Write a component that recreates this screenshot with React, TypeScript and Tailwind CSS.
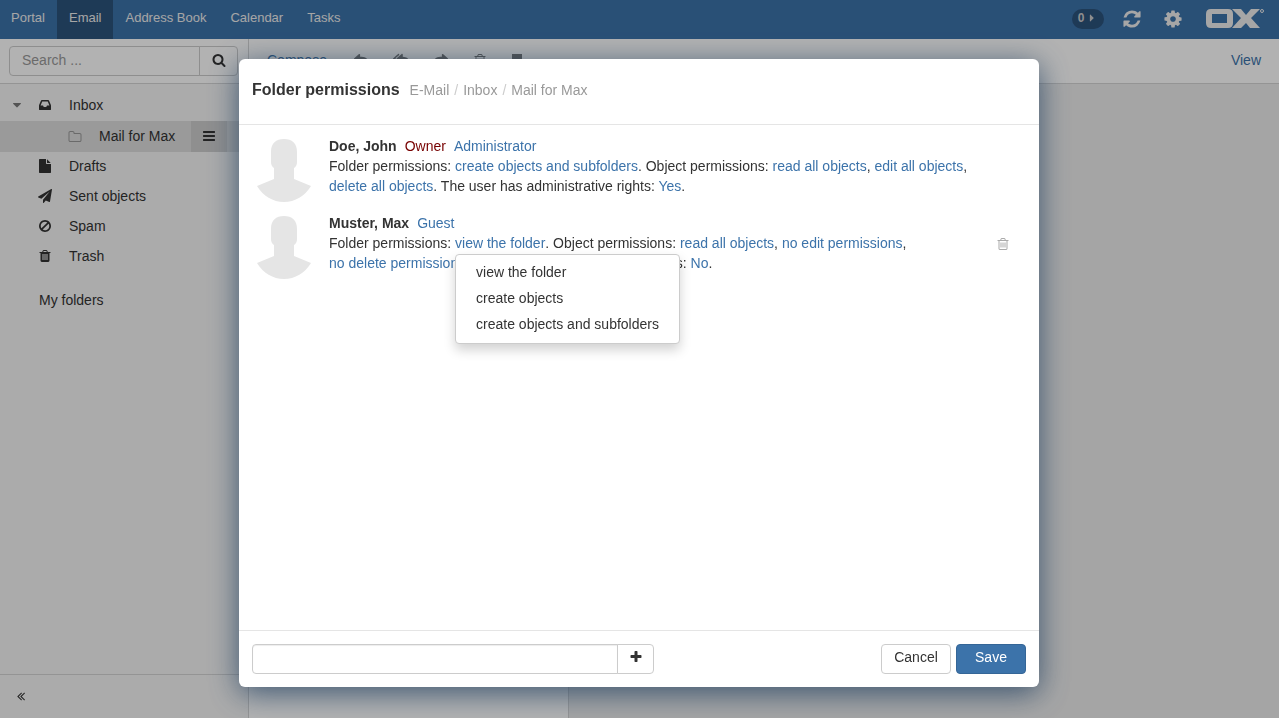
import { useState } from 'react';
import type { ReactNode } from 'react';
import { FaReply, FaReplyAll, FaShare } from 'react-icons/fa';

const TRASH_LID = 'M672 384h448l-48-117q-7-9-17-11h-317q-10 2-17 11zm928 32v64q0 14-9 23t-23 9h-96v948q0 83-47 143.5t-113 60.5h-832q-66 0-113-58.5t-47-141.5v-952h-96q-14 0-23-9t-9-23v-64q0-14 9-23t23-9h309l70-167q15-37 54-63t79-26h320q40 0 79 26t54 63l70 167h309q14 0 23 9t9 23z';

const ICONS = {
    search: 'M1216 832q0-185-131.5-316.5t-316.5-131.5-316.5 131.5-131.5 316.5 131.5 316.5 316.5 131.5 316.5-131.5 131.5-316.5zm512 832q0 52-38 90t-90 38q-54 0-90-38l-343-342q-179 124-399 124-143 0-273.5-55.5t-225-150-150-225-55.5-273.5 55.5-273.5 150-225 225-150 273.5-55.5 273.5 55.5 225 150 150 225 55.5 273.5q0 220-124 399l343 343q37 37 37 90z',
    refresh: 'M1639 1056q0 5-1 7-64 268-268 434.5t-478 166.5q-146 0-282.5-55t-243.5-157l-129 129q-19 19-45 19t-45-19-19-45v-448q0-26 19-45t45-19h448q26 0 45 19t19 45-19 45l-137 137q71 66 161 102t187 36q134 0 250-65t186-179q11-17 53-117 8-23 30-23h192q13 0 22.5 9.5t9.5 22.5zm25-800v448q0 26-19 45t-45 19h-448q-26 0-45-19t-19-45 19-45l138-138q-148-137-349-137-134 0-250 65t-186 179q-11 17-53 117-8 23-30 23h-199q-13 0-22.5-9.5t-9.5-22.5v-7q65-268 270-434.5t480-166.5q146 0 284 55.5t245 156.5l130-129q19-19 45-19t45 19 19 45z',
    cog: 'M1152 896q0-106-75-181t-181-75-181 75-75 181 75 181 181 75 181-75 75-181zm512-109v222q0 12-8 23t-20 13l-185 28q-19 54-39 91 35 50 107 138 10 12 10 25t-9 23q-27 37-99 108t-94 71q-12 0-26-9l-138-108q-44 23-91 38-16 136-29 186-7 28-36 28h-222q-14 0-24.5-8.5t-11.5-21.5l-28-184q-49-16-90-37l-141 107q-10 9-25 9-14 0-25-11-126-114-165-168-7-10-7-23 0-12 8-23 15-21 51-66.5t54-70.5q-27-50-41-99l-183-27q-13-2-21-12.5t-8-23.5v-222q0-12 8-23t19-13l186-28q14-46 39-92-40-57-107-138-10-12-10-24 0-10 9-23 26-36 98.5-107.5t94.5-71.5q13 0 26 10l138 107q44-23 91-38 16-136 29-186 7-28 36-28h222q14 0 24.5 8.5t11.5 21.5l28 184q49 16 90 37l142-107q9-9 24-9 13 0 25 10 129 119 165 170 7 8 7 22 0 12-8 23-15 21-51 66.5t-54 70.5q26 50 41 98l183 28q13 2 21 12.5t8 23.5z',
    inbox: 'M1151 960h316q-1-3-2.500-8t-2.500-8l-212-496h-708l-212 496q-1 2-2.500 8t-2.500 8h316l95 192h320zm513 30v482q0 26-19 45t-45 19h-1408q-26 0-45-19t-19-45v-482q0-62 25-123l238-552q10-25 36.500-42t52.500-17h832q26 0 52.500 17t36.500 42l238 552q25 61 25 123z',
    file: 'M1152 512v-472q22 14 36 28l408 408q14 14 28 36h-472zm-128 32q0 40 28 68t68 28h544v1056q0 40-28 68t-68 28h-1344q-40 0-68-28t-28-68v-1600q0-40 28-68t68-28h800v544z',
    plane: 'M1764 11q33 24 27 64l-256 1536q-5 29-32 45-14 8-31 8-11 0-24-5l-453-185-242 295q-18 23-49 23-13 0-22-4-19-7-30.500-23.500t-11.500-36.500v-349l864-1059-1069 925-395-162q-37-14-40-55-2-40 32-59l1664-960q15-9 32-9 20 0 36 11z',
    ban: 'M1440 893q0-161-87-295l-754 753q137 89 297 89 111 0 211.500-43.500t173.500-116.500 116-174.500 43-212.500zm-999 299l755-754q-135-91-300-91-148 0-273 73t-198 199-73 274q0 162 89 299zm1223-299q0 157-61 300t-163.500 246-245 164-298.500 61-298.500-61-245-164-163.500-246-61-300 61-299.500 163.500-245.500 245-164 298.500-61 298.500 61 245 164 163.500 245.500 61 299.500z',
    trash: `M576 640h128v768h-128zM832 640h128v768h-128zM1088 640h128v768h-128z${TRASH_LID}`,
    trashOutline: `M576 704h128v640h-128zM832 704h128v640h-128zM1088 704h128v640h-128zM1344 1460v-948h-896v948q0 22 7 40.500t14.500 27 10.500 8.500h832q3 0 10.500-8.500t14.500-27 7-40.500z${TRASH_LID}`,
    folder: 'M1600 1312v-704q0-40-28-68t-68-28h-704q-40 0-68-28t-28-68v-64q0-40-28-68t-68-28h-320q-40 0-68 28t-28 68v960q0 40 28 68t68 28h1216q40 0 68-28t28-68zm128-704v704q0 92-66 158t-158 66h-1216q-92 0-158-66t-66-158v-960q0-92 66-158t158-66h320q92 0 158 66t66 158v32h672q92 0 158 66t66 158z',
    bars: 'M1664 1344v128q0 26-19 45t-45 19h-1408q-26 0-45-19t-19-45v-128q0-26 19-45t45-19h1408q26 0 45 19t19 45zm0-512v128q0 26-19 45t-45 19h-1408q-26 0-45-19t-19-45v-128q0-26 19-45t45-19h1408q26 0 45 19t19 45zm0-512v128q0 26-19 45t-45 19h-1408q-26 0-45-19t-19-45v-128q0-26 19-45t45-19h1408q26 0 45 19t19 45z',
    plus: 'M1600 736v192q0 40-28 68t-68 28h-416v416q0 40-28 68t-68 28h-192q-40 0-68-28t-28-68v-416h-416q-40 0-68-28t-28-68v-192q0-40 28-68t68-28h416v-416q0-40 28-68t68-28h192q40 0 68 28t28 68v416h416q40 0 68 28t28 68z',
    caretDown: 'M1408 704q0 26-19 45l-448 448q-19 19-45 19t-45-19l-448-448q-19-19-19-45t19-45 45-19h896q26 0 45 19t19 45z',
    caretRight: 'M1152 896q0 26-19 45l-448 448q-19 19-45 19t-45-19-19-45v-896q0-26 19-45t45-19 45 19l448 448q19 19 19 45z',
    collapse: 'M1011 1376q0 13-10 23l-50 50q-10 10-23 10t-23-10l-466-466q-10-10-10-23t10-23l466-466q10-10 23-10t23 10l50 50q10 10 10 23t-10 23l-393 393 393 393q10 10 10 23zm384 0q0 13-10 23l-50 50q-10 10-23 10t-23-10l-466-466q-10-10-10-23t10-23l466-466q10-10 23-10t23 10l50 50q10 10 10 23t-10 23l-393 393 393 393q10 10 10 23z',
    archive: 'M256 128h1280v1536h-1280z',
};

type IconName = keyof typeof ICONS;

function Icon({ name, className = 'size-3.5' }: { name: IconName; className?: string }) {
    return (
        <svg viewBox="0 0 1792 1792" fill="currentColor" fillRule="evenodd" aria-hidden="true" className={`shrink-0 ${className}`}>
            <path d={ICONS[name]} />
        </svg>
    );
}

function Logo() {
    return (
        <svg viewBox="0 0 60 20" fill="currentColor" role="img" aria-label="OX" className="h-5 w-[60px]">
            <path fillRule="evenodd" d="M5 0H22Q27 0 27 5V14Q27 19 22 19H5Q0 19 0 14V5Q0 0 5 0ZM6 5V14H21V5Z" />
            <path d="M26 0H35L40 6L45 0H54L45 9L54 19H44L40 14L35 19H26L35 9Z" />
            <circle cx="56" cy="2" r="1.500" fill="none" stroke="currentColor" />
        </svg>
    );
}

function Avatar() {
    return (
        <svg viewBox="0 0 64 64" aria-hidden="true" className="size-16 shrink-0 fill-[#e5e5e5]">
            <path d="M19 14C19 5 24 1 32 1S45 5 45 14V24Q45 28 42 30V41L59 48C53 58 43 64 32 64S11 58 5 48L22 41V30Q19 28 19 24Z" />
        </svg>
    );
}

function TextLink({ children }: { children: ReactNode }) {
    return <a href="#" className="whitespace-nowrap text-[#3c73aa] hover:underline">{children}</a>;
}

const apps = ['Portal', 'Email', 'Address Book', 'Calendar', 'Tasks'];

const folders: { icon: IconName; title: string }[] = [
    { icon: 'file', title: 'Drafts' },
    { icon: 'plane', title: 'Sent objects' },
    { icon: 'ban', title: 'Spam' },
    { icon: 'trash', title: 'Trash' },
];

function TopBar() {
    return (
        <header className="flex h-[39px] shrink-0 items-center justify-between bg-[#3c73aa] text-[#eee]">
            <nav className="-ml-px flex h-full text-[13px]">
                {apps.map((app) => (
                    <a
                        key={app}
                        href="#"
                        className={`flex items-center px-3 pb-1 ${app === 'Email' ? 'bg-[#2c537c]' : ''}`}
                    >
                        {app}
                    </a>
                ))}
            </nav>
            <div className="flex items-center pr-[13px] pb-0.5">
                <button className="flex h-5 w-8 items-center justify-center gap-0.5 rounded-full bg-[#2c537c] pb-0.5 text-xs font-bold text-[#ccc]">
                    0 <Icon name="caretRight" className="size-3" />
                </button>
                <button aria-label="Refresh" className="ml-[18px]"><Icon name="refresh" className="size-5" /></button>
                <button aria-label="Settings" className="ml-[21px] mr-[23px]"><Icon name="cog" className="size-5" /></button>
                <Logo />
            </div>
        </header>
    );
}

function Sidebar() {
    return (
        <aside className="flex w-[249px] shrink-0 flex-col border-r border-[#d5d5d5] bg-[#f5f5f5]">
            <div className="flex h-[45px] items-start border-b border-[#d5d5d5] bg-white px-[9px] pt-[7px]">
                <input
                    type="text"
                    aria-label="Search"
                    placeholder="Search ..."
                    className="h-[30px] w-[191px] rounded-l border border-[#ccc] px-3 pb-0.5 placeholder:text-[#999]"
                />
                <button aria-label="Start search" className="-ml-px flex h-[30px] w-[39px] items-center justify-center rounded-r border border-[#ccc] pb-0.5">
                    <Icon name="search" />
                </button>
            </div>
            <ul className="flex-1 pt-[7px]">
                <li className="flex h-[30px] items-center pb-0.5 pl-2.5">
                    <Icon name="caretDown" className="size-3.5 text-[#777]" />
                    <Icon name="inbox" className="ml-3.5 size-3.5" />
                    <a href="#" className="ml-[17px]">Inbox</a>
                </li>
                <li className="flex h-[31px] items-center bg-[#ddd] pl-[68px]">
                    <Icon name="folder" className="size-3.5 text-[#999]" />
                    <a href="#" className="ml-[17px] flex-1 pb-0.5">Mail for Max</a>
                    <button aria-label="Folder actions" className="mr-[21px] flex h-full w-9 items-center justify-center bg-[#cdcdcd] pb-0.5">
                        <Icon name="bars" />
                    </button>
                </li>
                {folders.map((folder) => (
                    <li key={folder.title} className="flex h-[30px] items-center pb-0.5 pl-[38px]">
                        <Icon name={folder.icon} />
                        <a href="#" className="ml-[17px]">{folder.title}</a>
                    </li>
                ))}
                <li className="mt-3.5 flex h-[30px] items-center pb-0.5 pl-[39px]">My folders</li>
            </ul>
            <div className="flex h-11 items-center border-t border-[#d5d5d5] pb-0.5 pl-3.5">
                <button aria-label="Collapse sidebar"><Icon name="collapse" /></button>
            </div>
        </aside>
    );
}

function Toolbar() {
    return (
        <div className="flex h-[45px] shrink-0 items-center justify-between border-b border-[#d5d5d5] bg-white px-[18px] pb-0.5">
            <div className="flex items-center text-[#777]">
                <a href="#" className="text-[#3c73aa]">Compose</a>
                <button aria-label="Reply" className="ml-[27px]"><FaReply size={14} /></button>
                <button aria-label="Reply all" className="ml-[25px]"><FaReplyAll size={16} /></button>
                <button aria-label="Forward" className="ml-[25px]"><FaShare size={14} /></button>
                <button aria-label="Delete" className="ml-[25px]"><Icon name="trashOutline" /></button>
                <button aria-label="Archive" className="ml-[23px]"><Icon name="archive" /></button>
            </div>
            <a href="#" className="text-[#3c73aa]">View</a>
        </div>
    );
}

function FolderMenu({ onSelect }: { onSelect: () => void }) {
    const options = ['view the folder', 'create objects', 'create objects and subfolders'];

    return (
        <ul role="menu" className="absolute top-full left-0 z-10 mt-px rounded border border-[#ccc] bg-white py-[5px] shadow-[0_6px_12px_rgba(0,0,0,0.18)]">
            {options.map((option) => (
                <li key={option} role="none">
                    <button role="menuitem" onClick={onSelect} className="block h-[26px] px-5 pb-0.5 whitespace-nowrap text-[#333] hover:bg-gray-100">
                        {option}
                    </button>
                </li>
            ))}
        </ul>
    );
}

function PermissionsDialog() {
    const [menuOpen, setMenuOpen] = useState(true);

    return (
        <div
            role="dialog"
            aria-labelledby="dialog-title"
            className="flex w-full max-w-[800px] flex-col rounded-md bg-white shadow-[0_6px_30px_rgba(31,63,96,0.8)]"
        >
            <div className="flex h-[66px] items-center border-b border-[#e5e5e5] px-[13px] pb-1">
                <h1 id="dialog-title" className="text-base font-bold">Folder permissions</h1>
                <ol className="ml-2.5 flex gap-[5px] pt-px text-[#999]">
                    <li>E-Mail</li>
                    <li className="before:mr-[5px] before:text-[#ccc] before:content-['/']">Inbox</li>
                    <li className="before:mr-[5px] before:text-[#ccc] before:content-['/']">Mail for Max</li>
                </ol>
            </div>

            <div className="flex flex-1 flex-col gap-[13px] px-[13px] pt-[13px]">
                <div className="flex items-start">
                    <Avatar />
                    <div className="-mt-0.5 ml-[13px] flex-1 pr-10">
                        <div>
                            <b>Doe, John</b>
                            <span className="ml-2 text-[#700]">Owner</span>
                            <span className="ml-2 text-[#3c73aa]">Administrator</span>
                        </div>
                        <p>
                            Folder permissions: <TextLink>create objects and subfolders</TextLink>. Object permissions:{' '}
                            <TextLink>read all objects</TextLink>, <TextLink>edit all objects</TextLink>,{' '}
                            <TextLink>delete all objects</TextLink>. The user has administrative rights: <TextLink>Yes</TextLink>.
                        </p>
                    </div>
                </div>

                <div className="flex items-start">
                    <Avatar />
                    <div className="-mt-0.5 ml-[13px] flex-1">
                        <div>
                            <b>Muster, Max</b>
                            <span className="ml-2 text-[#3c73aa]">Guest</span>
                        </div>
                        <p>
                            Folder permissions:{' '}
                            <span className="relative inline-block">
                                <button onClick={() => setMenuOpen(!menuOpen)} className="block text-[#3c73aa] hover:underline">view the folder</button>
                                {menuOpen && <FolderMenu onSelect={() => setMenuOpen(false)} />}
                            </span>
                            . Object permissions: <TextLink>read all objects</TextLink>, <TextLink>no edit permissions</TextLink>,{' '}
                            <TextLink>no delete permissions</TextLink>. The user has administrative rights: <TextLink>No</TextLink>.
                        </p>
                    </div>
                    <button aria-label="Remove Muster, Max" className="mt-[22px] mr-4 ml-3 text-[#aaa]">
                        <Icon name="trashOutline" />
                    </button>
                </div>
            </div>

            <div className="flex items-center justify-between gap-4 border-t border-[#e5e5e5] p-[13px]">
                <div className="flex w-full max-w-[402px]">
                    <input
                        type="text"
                        aria-label="Add people"
                        className="h-[30px] min-w-0 flex-1 rounded-l border border-[#ccc] px-3 shadow-[inset_0_1px_1px_rgba(0,0,0,0.075)]"
                    />
                    <button aria-label="Add" className="-ml-px flex h-[30px] w-[37px] items-center justify-center rounded-r border border-[#ccc] pb-1">
                        <Icon name="plus" />
                    </button>
                </div>
                <div className="flex gap-[5px]">
                    <button className="h-[30px] w-[70px] rounded border border-[#ccc] pb-1">Cancel</button>
                    <button className="h-[30px] w-[70px] rounded border border-[#356697] bg-[#3c73aa] pb-1 text-white">Save</button>
                </div>
            </div>
        </div>
    );
}

export default function App() {
    return (
        <div className="font-['Liberation_Sans',Arial,sans-serif] text-sm leading-5 text-[#333]">
            <div className="flex h-screen flex-col">
                <TopBar />
                <div className="flex min-h-0 flex-1">
                    <Sidebar />
                    <main className="flex min-w-0 flex-1 flex-col">
                        <Toolbar />
                        <div className="flex flex-1">
                            <div className="w-80 border-r border-[#d5d5d5] bg-white" />
                            <div className="flex-1 bg-[#ededed]" />
                        </div>
                    </main>
                </div>
            </div>
            <div className="fixed inset-0 flex justify-center bg-black/30 pt-[59px] pr-px pb-[31px]">
                <PermissionsDialog />
            </div>
        </div>
    );
}
